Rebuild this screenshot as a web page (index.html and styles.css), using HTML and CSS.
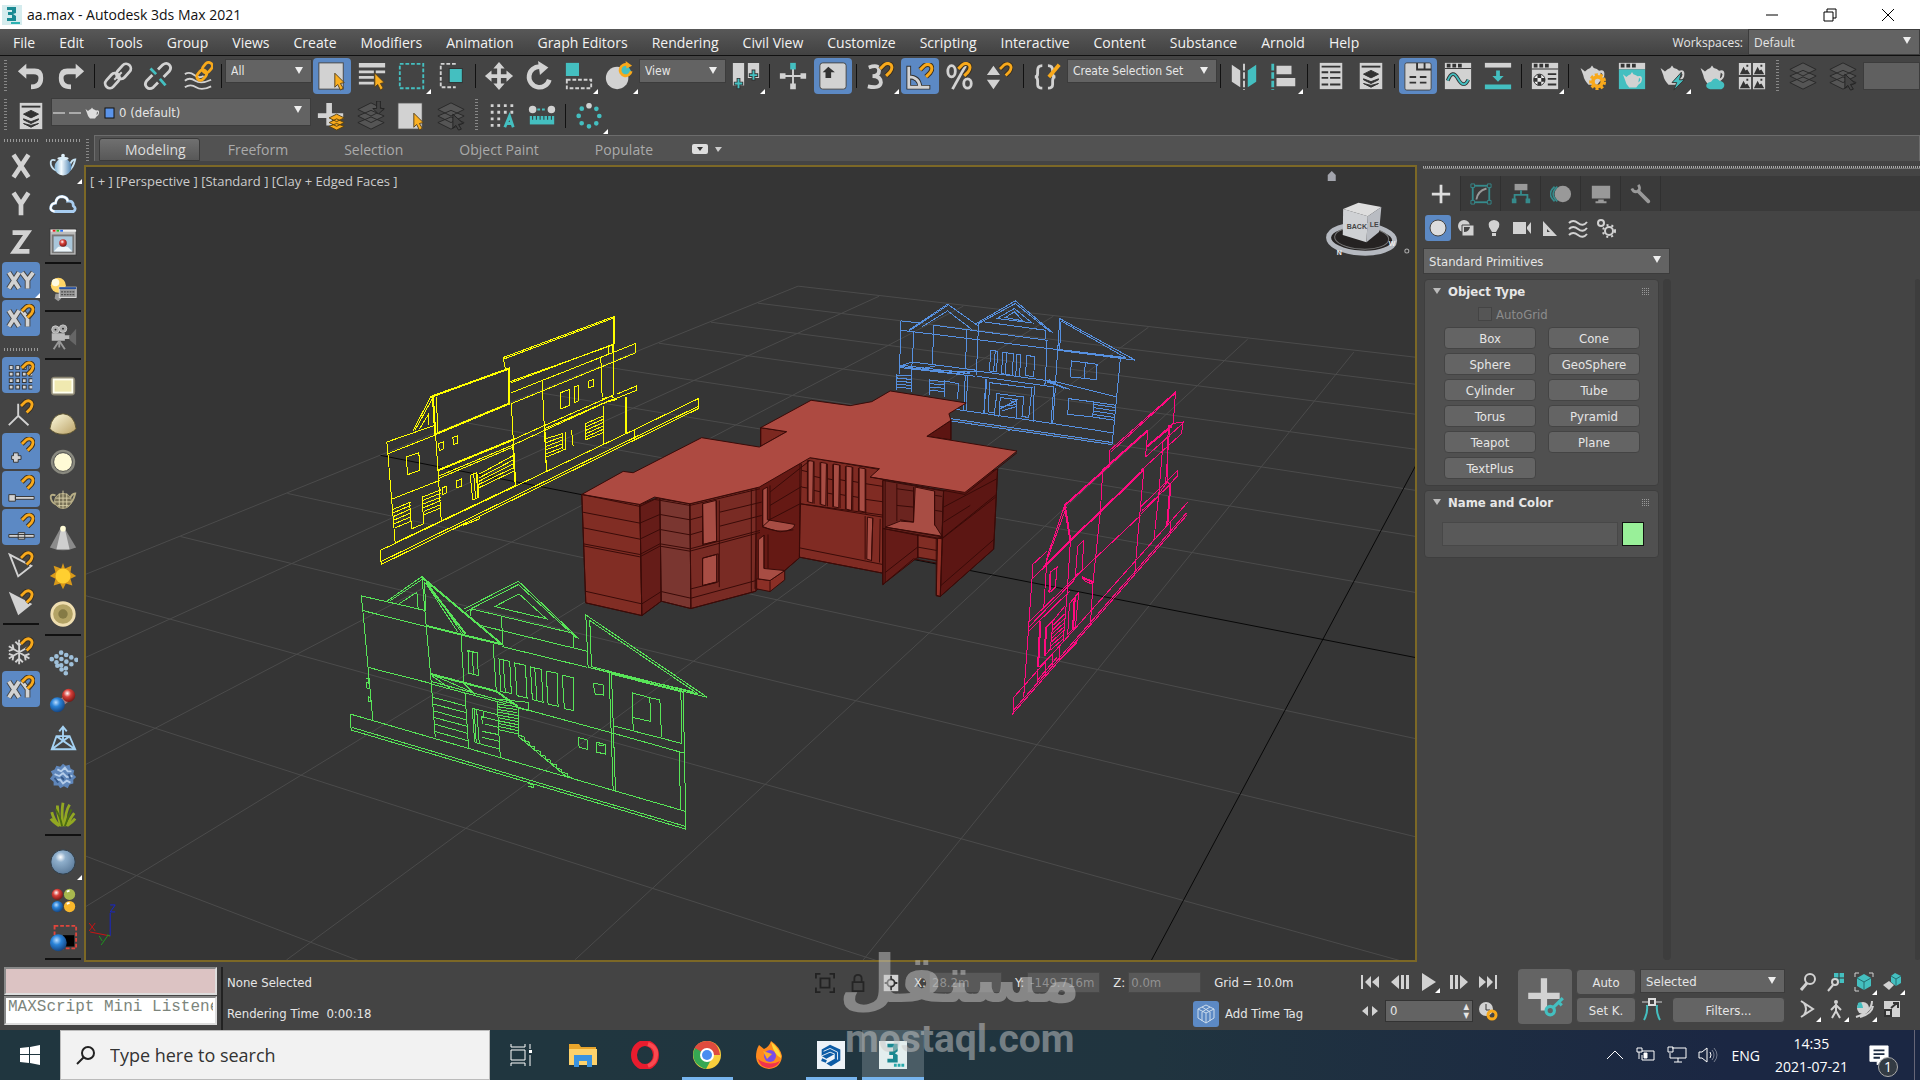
FILE: index.html
```
<!DOCTYPE html>
<html lang="en">
<head>
    <meta charset="UTF-8">
    <meta name="viewport" content="width=device-width, initial-scale=1.0">
    <title>aa.max - Autodesk 3ds Max 2021</title>
    <link rel="stylesheet" href="styles.css">
</head>
<body>
    <!-- Icon sprite -->
    <svg class="sprite" aria-hidden="true">
        <defs>
            <linearGradient id="gold" x1="0" y1="0" x2="1" y2="1"><stop offset="0" stop-color="#fffde0"/><stop offset="1" stop-color="#b9a065"/></linearGradient>
            <radialGradient id="glass" cx=".4" cy=".3" r=".7"><stop offset="0" stop-color="#fff"/><stop offset=".3" stop-color="#8fafcc"/><stop offset="1" stop-color="#5d7c9b"/></radialGradient>
            <radialGradient id="blueBall" cx=".4" cy=".35" r=".7"><stop offset="0" stop-color="#b8dcff"/><stop offset=".4" stop-color="#2a83d8"/><stop offset="1" stop-color="#143f78"/></radialGradient>
            <radialGradient id="redBall" cx=".4" cy=".35" r=".7"><stop offset="0" stop-color="#fff"/><stop offset=".4" stop-color="#d8403a"/><stop offset="1" stop-color="#6d1512"/></radialGradient>
            <linearGradient id="pot" x1="0" y1="0" x2="1" y2="0"><stop offset="0" stop-color="#7fb2d6"/><stop offset=".4" stop-color="#f4fbff"/><stop offset="1" stop-color="#4d83b3"/></linearGradient>
        </defs>
        <symbol id="magnet" viewBox="0 0 16 16"><path d="M2 7 L6 3 Q10 0 13 3 Q15 6 12 10 L8 14" fill="none" stroke="#3a3020" stroke-width="5"/><path d="M2 7 L6 3 Q10 0 13 3 Q15 6 12 10 L8 14" fill="none" stroke="#f8a91b" stroke-width="3"/></symbol>
        <symbol id="cursor" viewBox="0 0 12 20"><path d="M1 1 V16 L4 13 L7 19 L10 17 L7 12 L11 11 Z" fill="#fbb021" stroke="#55401a"/></symbol>
        <symbol id="undo" viewBox="0 0 32 32"><path d="M2 11 L11 3 V8 H20 Q29 8 29 18 Q29 30 16 30 V25 Q24 25 24 18 Q24 14 19 14 H11 V19 Z" fill="#d2d2d2"/></symbol>
        <symbol id="redo" viewBox="0 0 32 32"><path d="M30 11 L21 3 V8 H12 Q3 8 3 18 Q3 30 16 30 V25 Q8 25 8 18 Q8 14 13 14 H21 V19 Z" fill="#d2d2d2"/></symbol>
        <symbol id="link" viewBox="0 0 32 32"><g fill="none" stroke="#d2d2d2" stroke-width="3"><rect x="13" y="6" width="18" height="10" rx="5" transform="rotate(-48 22 11)"/><rect x="1" y="16" width="18" height="10" rx="5" transform="rotate(-48 10 21)"/></g><path d="M12 20 L20 12" stroke="#d2d2d2" stroke-width="2"/></symbol>
        <symbol id="unlink" viewBox="0 0 32 32"><g fill="none" stroke="#d2d2d2" stroke-width="3"><path d="M16 9 L21 4 Q25 1 28 4 Q31 7 28 11 L22 17 M10 15 L4 21 Q1 25 4 28 Q7 31 11 28 L16 23"/></g><path d="M8 8 L14 14 M18 19 L24 26" stroke="#44bfc0" stroke-width="3"/></symbol>
        <symbol id="bind" viewBox="0 0 32 32"><path d="M2 14 Q7 11 12 15 T22 16 M2 21 Q7 17 13 21 T30 20 M2 28 Q8 24 14 28 T30 27" fill="none" stroke="#d2d2d2" stroke-width="2"/><g fill="none" stroke="#f8a91b" stroke-width="3"><rect x="20" y="3" width="12" height="8" rx="4" transform="rotate(-50 26 7)"/><rect x="14" y="11" width="12" height="8" rx="4" transform="rotate(-50 20 15)"/></g></symbol>
        <symbol id="select" viewBox="0 0 32 32"><rect x="2" y="2" width="26" height="28" fill="#d2d2d2" stroke="#444"/><use href="#cursor" x="18" y="12" width="12" height="20"/></symbol>
        <symbol id="byname" viewBox="0 0 32 32"><path d="M2 2 H30 V7 H2 Z M2 10 H18 V13 H2 Z M2 16 H18 V19 H2 Z M2 22 H18 V25 H2 Z M20 10 H30 V13 H20 Z" fill="#d2d2d2"/><use href="#cursor" x="18" y="12" width="12" height="20"/></symbol>
        <symbol id="region" viewBox="0 0 32 32"><rect x="3" y="3" width="25" height="26" fill="none" stroke="#44bfc0" stroke-width="2" stroke-dasharray="4 2"/></symbol>
        <symbol id="crossing" viewBox="0 0 32 32"><path d="M20 3 H4 V28 H20" fill="none" stroke="#d2d2d2" stroke-width="2" stroke-dasharray="4 2"/><rect x="13" y="8" width="14" height="15" fill="#44bfc0" stroke="#303030"/></symbol>
        <symbol id="move" viewBox="0 0 32 32"><path d="M16 1 L22 8 H18 V14 H24 V10 L31 16 L24 22 V18 H18 V24 H22 L16 31 L10 24 H14 V18 H8 V22 L1 16 L8 10 V14 H14 V8 H10 Z" fill="#d2d2d2"/></symbol>
        <symbol id="rotate" viewBox="0 0 32 32"><path d="M17 6 A11 11 0 1 0 27 20" fill="none" stroke="#d2d2d2" stroke-width="5"/><path d="M15 0 L26 7 L17 15 Z" fill="#d2d2d2"/></symbol>
        <symbol id="scale" viewBox="0 0 32 32"><rect x="2" y="2" width="14" height="14" fill="#44bfc0"/><rect x="3" y="20" width="26" height="9" fill="none" stroke="#d2d2d2" stroke-width="2" stroke-dasharray="4 2"/></symbol>
        <symbol id="place" viewBox="0 0 32 32"><ellipse cx="14" cy="18" rx="12" ry="12" fill="#d2d2d2"/><path d="M25 4 A6 6 0 1 0 29 11" fill="#44bfc0" stroke="#f8a91b" stroke-width="3"/><path d="M23 0 L30 5 L24 8 Z" fill="#f8a91b"/></symbol>
        <symbol id="pivot" viewBox="0 0 32 32"><path d="M2 2 H14 V26 H2 Z M18 2 H30 V18 H18 Z" fill="#d2d2d2"/><path d="M8 18 V30 M3 24 H13 M24 9 V21 M19 15 H29" stroke="#333" stroke-width="4"/><path d="M8 19 V29 M4 24 H12 M24 10 V20 M20 15 H28" stroke="#44bfc0" stroke-width="2"/></symbol>
        <symbol id="manipulate" viewBox="0 0 32 32"><path d="M16 6 V27 M5 16 H27" stroke="#d2d2d2" stroke-width="2"/><path d="M2 13 H8 V19 H2 Z M24 13 H30 V19 H24 Z M13 24 H19 V30 H13 Z" fill="#d2d2d2"/><rect x="13" y="2" width="6" height="7" fill="#44bfc0"/></symbol>
        <symbol id="override" viewBox="0 0 32 32"><rect x="2" y="2" width="28" height="28" rx="3" fill="#d2d2d2" stroke="#444"/><path d="M11 6 L18 12 H14 V18 H8 V12 H5 Z" fill="#333"/></symbol>
        <symbol id="snap3" viewBox="0 0 32 32"><path d="M4 7 Q15 3 15 10 Q15 16 8 16 Q17 16 17 23 Q16 30 3 27" fill="none" stroke="#d2d2d2" stroke-width="4"/><use href="#magnet" x="14" y="1" width="17" height="17"/></symbol>
        <symbol id="snapangle" viewBox="0 0 32 32"><path d="M4 5 V28 H27 M4 17 Q15 17 16 28" fill="none" stroke="#303030" stroke-width="5"/><path d="M4 6 V28 H26 M4 17 Q15 17 16 28" fill="none" stroke="#d2d2d2" stroke-width="3"/><use href="#magnet" x="14" y="2" width="17" height="17"/></symbol>
        <symbol id="snappct" viewBox="0 0 32 32"><g fill="none" stroke="#d2d2d2" stroke-width="3"><ellipse cx="7" cy="11" rx="4" ry="6"/><ellipse cx="24" cy="24" rx="4" ry="5"/><path d="M22 5 L8 30"/></g><use href="#magnet" x="12" y="1" width="17" height="17"/></symbol>
        <symbol id="snapspin" viewBox="0 0 32 32"><path d="M2 15 L9 5 L16 15 Z M2 20 H16 L9 30 Z" fill="#d2d2d2"/><use href="#magnet" x="14" y="1" width="16" height="17"/></symbol>
        <symbol id="braces" viewBox="0 0 32 32"><path d="M11 5 Q6 5 6 10 V13 Q6 17 3 17 Q6 17 6 21 V25 Q6 29 11 29 M17 5 Q22 5 22 10 V13 Q22 17 25 17 Q22 17 22 21 V25 Q22 29 17 29" fill="none" stroke="#d2d2d2" stroke-width="3"/><path d="M29 4 L18 17" stroke="#f8a91b" stroke-width="4"/></symbol>
        <symbol id="mirror" viewBox="0 0 32 32"><path d="M3 4 L12 10 V28 L3 22 Z" fill="#d2d2d2"/><path d="M16 3 V31" stroke="#d2d2d2" stroke-width="2" stroke-dasharray="7 2"/><path d="M29 4 L20 10 V28 L29 22 Z" fill="#44bfc0"/></symbol>
        <symbol id="align" viewBox="0 0 32 32"><path d="M4 3 V31" stroke="#44bfc0" stroke-width="3" stroke-dasharray="7 2"/><path d="M8 5 H24 V14 H8 Z M8 18 H28 V27 H8 Z" fill="#d2d2d2"/></symbol>
        <symbol id="list" viewBox="0 0 32 32"><rect x="4" y="2" width="24" height="28" fill="#d2d2d2"/><path d="M6 6 H26 M6 12 H13 M15 12 H26 M6 18 H13 M15 18 H26 M6 25 H13 M15 25 H26" stroke="#333" stroke-width="2"/></symbol>
        <symbol id="layers" viewBox="0 0 32 32"><rect x="4" y="2" width="24" height="28" fill="#d2d2d2"/><path d="M6 6 H26" stroke="#333" stroke-width="2"/><path d="M8 14 L16 10 L24 14 L16 18 Z M8 19 L16 22 L24 19 L24 20 L16 24 L8 20 Z M8 24 L16 28 L24 24 L16 26 Z" fill="#303030" stroke="#303030"/></symbol>
        <symbol id="ribbon" viewBox="0 0 32 32"><rect x="2" y="2" width="28" height="29" rx="2" fill="#d2d2d2" stroke="#444"/><path d="M15 2 V9 H30 M23 2 V9 M7 17 H14 M18 17 H25 M7 23 H14 M18 23 H25" fill="none" stroke="#333" stroke-width="2"/></symbol>
        <symbol id="curve" viewBox="0 0 32 32"><path d="M2 2 H30 V30 H2 Z" fill="#d2d2d2"/><path d="M4 3 H8 V7 H4 Z M10 3 H14 V7 H10 Z M16 3 H20 V7 H16 Z" fill="#333"/><path d="M2 8 H30" stroke="#333"/><path d="M5 21 Q10 8 16 19 T27 20" fill="none" stroke="#333" stroke-width="4"/><path d="M5 21 Q10 8 16 19 T27 20" fill="none" stroke="#44bfc0" stroke-width="2"/></symbol>
        <symbol id="schematic" viewBox="0 0 32 32"><rect x="2" y="2" width="28" height="5" fill="#d2d2d2"/><path d="M14 10 H18 V16 H22 L16 22 L10 16 H14 Z M2 25 H30 V30 H2 Z" fill="#44bfc0"/></symbol>
        <symbol id="material" viewBox="0 0 32 32"><path d="M2 2 H30 V30 H2 Z" fill="#d2d2d2"/><path d="M4 3 H8 V7 H4 Z M10 3 H14 V7 H10 Z M16 3 H20 V7 H16 Z M2 8 H30 V9 H2 Z M19 13 H28 V15 H19 Z M19 18 H28 V20 H19 Z M19 24 H28 V26 H19 Z" fill="#333"/><circle cx="10" cy="20" r="6" fill="#eee" stroke="#333"/><path d="M8 14 H12 V18 H8 Z M4 18 H8 V22 H4 Z M12 18 H16 V22 H12 Z M8 22 H12 V26 H8 Z" fill="#333"/></symbol>
        <symbol id="teapot" viewBox="0 0 32 32"><path d="M3 8 L8 12 Q11 9 14 8 L16 5 L18 8 Q22 9 24 11 Q31 9 30 16 Q30 20 25 23 L22 27 H12 Q7 22 6 16 Z M26 13 L25 20 Q28 18 28 15 Z" fill="currentColor" fill-rule="evenodd"/></symbol>
        <symbol id="rsetup" viewBox="0 0 32 32"><use href="#teapot" width="32" height="30"/><circle cx="22" cy="22" r="7" fill="none" stroke="#f8a91b" stroke-width="4" stroke-dasharray="3 2"/><circle cx="22" cy="22" r="5" fill="none" stroke="#f8a91b" stroke-width="4"/></symbol>
        <symbol id="rframe" viewBox="0 0 32 32"><path d="M2 2 H30 V9 H2 Z" fill="#d2d2d2"/><path d="M4 3 H8 V7 H4 Z M10 3 H14 V7 H10 Z M16 3 H20 V7 H16 Z" fill="#333"/><path d="M2 9 H30 V30 H2 Z" fill="#44bfc0"/><use href="#teapot" x="2" y="8" width="28" height="24"/></symbol>
        <symbol id="rprod" viewBox="0 0 32 32"><use href="#teapot" width="32" height="30"/><path d="M26 12 L16 23 H21 L18 31 L29 20 H24 Z" fill="#44bfc0" stroke="#333"/></symbol>
        <symbol id="rcloud" viewBox="0 0 32 32"><use href="#teapot" width="32" height="30"/><path d="M14 30 Q9 29 10 25 Q12 22 15 22 Q19 16 24 21 Q30 22 29 27 Q28 30 26 30 Z" fill="#44bfc0"/></symbol>
        <symbol id="gallery" viewBox="0 0 32 32"><path d="M2 2 H15 V15 H2 Z M17 2 H30 V15 H17 Z M2 17 H15 V30 H2 Z M17 17 H30 V30 H17 Z" fill="#d2d2d2"/><path d="M3 14 L7 6 L9 10 L11 9 L14 14 Z M18 14 L22 6 L24 10 L26 9 L29 14 Z M3 29 L7 21 L9 25 L11 24 L14 29 Z M18 29 L22 21 L24 25 L26 24 L29 29 Z" fill="#333"/><path d="M10 4 H12 V6 H10 Z M25 4 H27 V6 H25 Z M10 19 H12 V21 H10 Z M25 19 H27 V21 H25 Z" fill="#333"/></symbol>
        <symbol id="stack" viewBox="0 0 32 32"><path d="M2 23 L16 17 L30 23 L16 30 Z M2 16 L16 10 L30 16 L16 23 Z M2 9 L16 2 L30 9 L16 16 Z" fill="#555" stroke="#272727"/></symbol>
        <symbol id="stackcur" viewBox="0 0 32 32"><use href="#stack"/><path d="M18 14 V29 L21 26 L24 31 L27 30 L24 25 L29 24 Z" fill="#444" stroke="#222"/></symbol>
        <symbol id="stackin" viewBox="0 0 32 32"><use href="#stack"/><path d="M22 0 H26 V8 H30 L24 14 L18 8 H22 Z" fill="#444" stroke="#222"/></symbol>
        <symbol id="newlayer" viewBox="0 0 32 32"><path d="M11 2 H17 V13 H29 V18 H17 V26 H11 V18 H2 V13 H11 Z" fill="#d2d2d2"/><path d="M14 18 L22 14 L30 18 L22 22 Z M14 23 L22 19 L30 23 L22 27 Z M14 27 L22 24 L30 27 L22 31 Z" fill="#f8a91b" stroke="#5a4210"/></symbol>
        <symbol id="arraya" viewBox="0 0 32 32"><path d="M4 5 H29 M4 12 H29 M4 19 H17 M4 26 H17" stroke="#d2d2d2" stroke-width="3" stroke-dasharray="3 4"/><path d="M19 28 L24 16 L28 28 M20 24 H27" fill="none" stroke="#44bfc0" stroke-width="3"/></symbol>
        <symbol id="measure" viewBox="0 0 32 32"><circle cx="6" cy="9" r="4" fill="#d2d2d2"/><circle cx="26" cy="9" r="4" fill="#d2d2d2"/><path d="M11 9 H21" stroke="#44bfc0" stroke-width="2" stroke-dasharray="3 2"/><path d="M3 16 H29 V25 H3 Z" fill="#44bfc0"/><path d="M6 16 V20 M10 16 V20 M14 16 V20 M18 16 V20 M22 16 V20 M26 16 V20" stroke="#303030"/></symbol>
        <symbol id="ring" viewBox="0 0 32 32"><circle cx="16" cy="16" r="11" fill="none" stroke="#44bfc0" stroke-width="5" stroke-linecap="round" stroke-dasharray="0 8.6"/><circle cx="16" cy="5" r="3" fill="#d2d2d2"/></symbol>
        <!-- Axis and snap column -->
        <symbol id="ax-x" viewBox="0 0 32 32"><path d="M8 4 L24 28 M24 4 L8 28" stroke="#d2d2d2" stroke-width="5"/></symbol>
        <symbol id="ax-y" viewBox="0 0 32 32"><path d="M8 4 L16 16 L24 4 M16 15 V28" fill="none" stroke="#d2d2d2" stroke-width="5"/></symbol>
        <symbol id="ax-z" viewBox="0 0 32 32"><path d="M7 6 H23 L9 26 H25" fill="none" stroke="#d2d2d2" stroke-width="5"/></symbol>
        <symbol id="ax-xy" viewBox="0 0 32 32"><g fill="none" stroke="#454545" stroke-width="6"><path d="M3 8 L14 25 M14 8 L3 25 M17 8 L23 16 L29 8 M23 15 V25"/></g><g fill="none" stroke="#d2d2d2" stroke-width="4"><path d="M3 8 L14 25 M14 8 L3 25 M17 8 L23 16 L29 8 M23 15 V25"/></g></symbol>
        <symbol id="ax-xym" viewBox="0 0 32 32"><use href="#ax-xy"/><use href="#magnet" x="15" y="1" width="16" height="17"/></symbol>
        <symbol id="s-grid" viewBox="0 0 32 32"><path d="M3 8 H28 M3 15 H28 M3 22 H28 M3 29 H28" stroke="#333" stroke-width="5" stroke-dasharray="5 2"/><path d="M4 8 H28 M4 15 H28 M4 22 H28 M4 29 H28" stroke="#d2d2d2" stroke-width="3" stroke-dasharray="3 4"/><use href="#magnet" x="15" y="1" width="16" height="17"/></symbol>
        <symbol id="s-axis" viewBox="0 0 32 32"><path d="M13 6 V19 L3 29 M13 19 L24 29" fill="none" stroke="#d2d2d2" stroke-width="2"/><use href="#magnet" x="14" y="1" width="16" height="17"/></symbol>
        <symbol id="s-vert" viewBox="0 0 32 32"><path d="M8 18 H13 V21 H16 V25 H13 V28 H8 V25 H6 V21 H8 Z" fill="#d2d2d2" stroke="#333"/><use href="#magnet" x="15" y="1" width="16" height="17"/></symbol>
        <symbol id="s-end" viewBox="0 0 32 32"><path d="M10 24 H30 V27 H10 Z M3 22 H10 V29 H3 Z" fill="#d2d2d2" stroke="#333"/><use href="#magnet" x="15" y="1" width="16" height="17"/></symbol>
        <symbol id="s-mid" viewBox="0 0 32 32"><path d="M3 24 H30 V27 H3 Z M13 22 H20 V29 H13 Z" fill="#d2d2d2" stroke="#333"/><use href="#magnet" x="15" y="1" width="16" height="17"/></symbol>
        <symbol id="s-edge" viewBox="0 0 32 32"><path d="M4 5 L27 17 L13 28 Z" fill="none" stroke="#d2d2d2" stroke-width="2"/><use href="#magnet" x="14" y="1" width="16" height="17"/></symbol>
        <symbol id="s-face" viewBox="0 0 32 32"><path d="M3 4 L28 17 L13 29 Z" fill="#d2d2d2"/><use href="#magnet" x="14" y="1" width="16" height="17"/></symbol>
        <symbol id="s-frost" viewBox="0 0 32 32"><path d="M14 4 V30 M3 11 L25 24 M25 11 L3 24 M10 6 L14 10 L18 6 M10 28 L14 24 L18 28 M3 16 L8 14 L7 9 M25 19 L20 21 L21 26 M3 19 L8 21 L7 26" fill="none" stroke="#d2d2d2" stroke-width="2"/><use href="#magnet" x="14" y="1" width="16" height="17"/></symbol>
        <!-- Objects column -->
        <symbol id="o-pot" viewBox="0 0 32 32"><path d="M8 10 Q2 8 3 14 Q4 19 9 21 M23 16 Q25 9 29 9 Q27 18 22 21" fill="none" stroke="#c7e2f2" stroke-width="2"/><ellipse cx="16" cy="17" rx="9" ry="9" fill="url(#pot)"/><ellipse cx="16" cy="8" rx="6" ry="2" fill="#d9ecf8"/><circle cx="16" cy="5" r="2" fill="#dff0fa"/></symbol>
        <symbol id="o-cloud" viewBox="0 0 32 32"><path d="M7 24 Q2 23 3 19 Q4 15 8 15 Q9 8 15 8 Q21 9 21 13 Q27 12 27 18 Q31 21 27 24 Z" fill="none" stroke="#a8cdf0" stroke-width="3"/><path d="M7 24 Q2 23 3 19 Q4 15 8 15 Q9 8 15 8 Q21 9 21 13" fill="none" stroke="#fff" stroke-width="2"/></symbol>
        <symbol id="o-frame" viewBox="0 0 32 32"><rect x="2" y="2" width="28" height="28" fill="#bbb" stroke="#333"/><path d="M3 4 H30" stroke="#eee" stroke-width="2"/><path d="M13 4 H16" stroke="#2b6df0" stroke-width="2"/><path d="M5 4 H8" stroke="#e02020" stroke-width="2"/><path d="M9 4 H12" stroke="#28b828" stroke-width="2"/><rect x="5" y="9" width="22" height="18" fill="#a9c6da" stroke="#777" stroke-width="2"/><path d="M6 26 L11 21 H21 L26 26 Z" fill="#eef6fa"/><circle cx="16" cy="17" r="4" fill="url(#redBall)"/></symbol>
        <symbol id="o-bulb" viewBox="0 0 32 32"><circle cx="11" cy="11" r="8" fill="#ffd566"/><circle cx="8" cy="8" r="4" fill="#fffbe0"/><path d="M8 20 H14 V25 L11 28 L7 25 Z" fill="#999"/><rect x="12" y="13" width="18" height="11" fill="#999" stroke="#ddd"/><path d="M12 14 H30" stroke="#2650a0" stroke-width="2"/><path d="M14 18 H28 M14 21 H28" stroke="#333" stroke-dasharray="2 1"/></symbol>
        <symbol id="o-cam" viewBox="0 0 32 32"><circle cx="8" cy="7" r="4" fill="#aaa" stroke="#ccc"/><circle cx="16" cy="6" r="4" fill="#aaa" stroke="#ccc"/><circle cx="8" cy="7" r="1" fill="#222"/><circle cx="16" cy="6" r="1" fill="#222"/><path d="M4 11 H18 V19 H4 Z M18 13 H23 V17 H18 Z" fill="#bbb"/><path d="M23 14 L30 6 V24 L23 18 Z" fill="#666"/><path d="M12 19 L6 28 M12 19 L18 28 M12 19 V26" stroke="#999" stroke-width="2"/></symbol>
        <symbol id="o-plane" viewBox="0 0 32 32"><rect x="3" y="6" width="26" height="20" rx="4" fill="#8c8672"/><rect x="6" y="9" width="20" height="14" fill="#f0e9b0" stroke="#fffff0" stroke-width="2"/></symbol>
        <symbol id="o-dome" viewBox="0 0 32 32"><path d="M2 21 Q4 6 16 5 Q28 6 30 21 Q25 27 16 27 Q7 27 2 21 Z" fill="url(#gold)" stroke="#5c522f"/></symbol>
        <symbol id="o-disc" viewBox="0 0 32 32"><circle cx="16" cy="16" r="13" fill="#8a8a80"/><circle cx="16" cy="16" r="10" fill="#fffbd6" stroke="#444"/></symbol>
        <symbol id="o-mesh" viewBox="0 0 32 32"><path d="M8 11 Q2 9 3 14 Q4 19 9 21 M23 16 Q25 9 29 9 Q27 18 22 21" fill="none" stroke="#b6ad85" stroke-width="2"/><ellipse cx="16" cy="17" rx="9" ry="8" fill="#777056" stroke="#b6ad85"/><path d="M8 14 H24 M7 18 H25 M10 22 H22 M12 9 V24 M16 6 V25 M20 9 V24" stroke="#d6cda5"/></symbol>
        <symbol id="o-spot" viewBox="0 0 32 32"><path d="M13 6 Q16 3 18 6 L30 26 Q16 32 2 26 Z" fill="#8b8b8b"/><path d="M14 6 H18 L23 28 H9 Z" fill="#cfcfcf"/><circle cx="16" cy="6" r="3" fill="#fffbd6"/></symbol>
        <symbol id="o-sun" viewBox="0 0 32 32"><path d="M16 2 L18 8 L25 5 L24 12 L30 16 L24 19 L26 26 L19 24 L16 30 L13 24 L6 26 L8 19 L2 16 L8 12 L6 5 L14 8 Z" fill="#d99a1a"/><circle cx="16" cy="16" r="8" fill="#ffcf30"/></symbol>
        <symbol id="o-ring" viewBox="0 0 32 32"><circle cx="16" cy="16" r="12" fill="#b3a365" stroke="#efdeb0" stroke-width="3"/><circle cx="16" cy="16" r="5" fill="#857a45"/></symbol>
        <symbol id="o-dots" viewBox="0 0 32 32"><g stroke="#9fc0da" stroke-width="5" stroke-linecap="round" stroke-dasharray="0 6"><path d="M14 6 L31 14"/><path d="M9 10 L26 19"/><path d="M4 13 L21 24"/><path d="M10 20 L19 28"/></g></symbol>
        <symbol id="o-balls" viewBox="0 0 32 32"><path d="M12 16 L20 9 L24 16 L16 22 Z" fill="#a98080"/><circle cx="10" cy="21" r="8" fill="url(#blueBall)"/><circle cx="22" cy="11" r="7" fill="url(#redBall)"/></symbol>
        <symbol id="o-pyr" viewBox="0 0 32 32"><path d="M4 28 L9 14 H23 L29 28 Z M9 14 L29 28 M23 14 L4 28 M16 20 V4 M12 9 L16 4 L20 9" fill="none" stroke="#a5d2f3" stroke-width="2"/></symbol>
        <symbol id="o-fur" viewBox="0 0 32 32"><path d="M16 3 L19 5 L23 4 L24 8 L28 10 L27 14 L30 17 L27 20 L27 24 L23 25 L21 29 L17 27 L13 29 L11 26 L6 26 L6 22 L2 19 L5 15 L3 11 L7 9 L9 5 L13 6 Z" fill="#5f86ba"/><path d="M10 9 L14 11 L18 7 L21 11 L25 11 M7 14 L12 16 L16 13 L20 17 L26 16 M8 20 L13 20 L16 24 L20 21 L24 23" fill="none" stroke="#b4cdea" stroke-width="2"/><path d="M7 18 L11 23 M14 17 L17 20 M22 14 L24 19" stroke="#355888" stroke-width="2"/></symbol>
        <symbol id="o-grass" viewBox="0 0 32 32"><path d="M12 29 Q6 22 4 14 M14 29 Q10 18 10 7 M16 29 Q14 15 16 4 M18 29 Q18 14 23 6 M20 29 Q24 20 28 15 M11 28 Q5 24 3 21 M21 28 Q26 25 29 21" fill="none" stroke="#92a822" stroke-width="3"/><path d="M15 29 Q13 18 8 11 M18 29 Q21 20 25 11" stroke="#4b6d12" stroke-width="2" fill="none"/></symbol>
        <symbol id="o-ball" viewBox="0 0 32 32"><circle cx="16" cy="16" r="13" fill="url(#glass)" stroke="#2e3c48"/></symbol>
        <symbol id="o-four" viewBox="0 0 32 32"><circle cx="10" cy="10" r="6" fill="url(#redBall)"/><circle cx="23" cy="10" r="6" fill="#a8b84e"/><circle cx="10" cy="23" r="6" fill="url(#blueBall)"/><circle cx="23" cy="23" r="6" fill="#f8b72c"/><path d="M20 7 L23 6 M20 20 L23 19" stroke="#fff" stroke-width="2"/></symbol>
        <symbol id="o-render" viewBox="0 0 32 32"><rect x="7" y="3" width="23" height="24" fill="none" stroke="#e0453c" stroke-width="2" stroke-dasharray="4 2"/><rect x="16" y="13" width="12" height="12"/><circle cx="11" cy="21" r="9" fill="url(#blueBall)"/></symbol>
    </svg>

    <header class="titlebar">
        <svg class="app-icon" viewBox="0 0 20 20"><rect width="20" height="20" fill="#d5ecee"/><path d="M5 2 H14 V8 L11 9 L14 11 V16 H5 V13 H10 V10 H6 V7 H10 V5 H5 Z" fill="#1a8a93"/><path d="M9 18 H18" stroke="#2db2b2" stroke-width="2"/></svg>
        <h1>aa.max - Autodesk 3ds Max 2021</h1>
        <div class="window-buttons">
            <button aria-label="Minimize"><svg viewBox="0 0 14 14"><path d="M1 7 H13"/></svg></button>
            <button aria-label="Restore"><svg viewBox="0 0 14 14"><path d="M1 4 H10 V13 H1 Z M4 4 V1 H13 V10 H10"/></svg></button>
            <button aria-label="Close"><svg viewBox="0 0 14 14"><path d="M1 1 L13 13 M13 1 L1 13"/></svg></button>
        </div>
    </header>

    <nav class="menubar">
        <a href="#">File</a><a href="#">Edit</a><a href="#">Tools</a><a href="#">Group</a><a href="#">Views</a><a href="#">Create</a><a href="#">Modifiers</a><a href="#">Animation</a><a href="#">Graph Editors</a><a href="#">Rendering</a><a href="#">Civil View</a><a href="#">Customize</a><a href="#">Scripting</a><a href="#">Interactive</a><a href="#">Content</a><a href="#">Substance</a><a href="#">Arnold</a><a href="#">Help</a>
        <label class="push" for="workspaces">Workspaces:</label>
        <span class="combo workspace"><select id="workspaces"><option>Default</option></select></span>
    </nav>

    <div class="toolbar main-toolbar">
        <i class="grip"></i>
        <button class="tool" aria-label="Undo"><svg><use href="#undo"/></svg></button>
        <button class="tool" aria-label="Redo"><svg><use href="#redo"/></svg></button>
        <i class="sep"></i>
        <button class="tool" aria-label="Link"><svg><use href="#link"/></svg></button>
        <button class="tool" aria-label="Unlink"><svg><use href="#unlink"/></svg></button>
        <button class="tool" aria-label="Bind to space warp"><svg><use href="#bind"/></svg></button>
        <i class="sep"></i>
        <span class="combo small"><select aria-label="Selection filter"><option>All</option></select></span>
        <button class="tool on" aria-label="Select object"><svg><use href="#select"/></svg></button>
        <button class="tool" aria-label="Select by name"><svg><use href="#byname"/></svg></button>
        <button class="tool more" aria-label="Selection region"><svg><use href="#region"/></svg></button>
        <button class="tool" aria-label="Window/crossing"><svg><use href="#crossing"/></svg></button>
        <i class="sep"></i>
        <button class="tool" aria-label="Move"><svg><use href="#move"/></svg></button>
        <button class="tool" aria-label="Rotate"><svg><use href="#rotate"/></svg></button>
        <button class="tool more" aria-label="Scale"><svg><use href="#scale"/></svg></button>
        <button class="tool more" aria-label="Place"><svg><use href="#place"/></svg></button>
        <span class="combo small"><select aria-label="Coordinate system"><option>View</option></select></span>
        <button class="tool more" aria-label="Pivot center"><svg><use href="#pivot"/></svg></button>
        <i class="sep"></i>
        <button class="tool" aria-label="Manipulate"><svg><use href="#manipulate"/></svg></button>
        <button class="tool on" aria-label="Keyboard override"><svg><use href="#override"/></svg></button>
        <i class="sep"></i>
        <button class="tool more" aria-label="Snaps"><svg><use href="#snap3"/></svg></button>
        <button class="tool on" aria-label="Angle snap"><svg><use href="#snapangle"/></svg></button>
        <button class="tool" aria-label="Percent snap"><svg><use href="#snappct"/></svg></button>
        <button class="tool" aria-label="Spinner snap"><svg><use href="#snapspin"/></svg></button>
        <i class="sep"></i>
        <button class="tool" aria-label="Edit selection sets"><svg><use href="#braces"/></svg></button>
        <span class="combo set"><select aria-label="Selection sets"><option>Create Selection Set</option></select></span>
        <i class="sep"></i>
        <button class="tool" aria-label="Mirror"><svg><use href="#mirror"/></svg></button>
        <button class="tool more" aria-label="Align"><svg><use href="#align"/></svg></button>
        <i class="sep"></i>
        <button class="tool" aria-label="Scene explorer"><svg><use href="#list"/></svg></button>
        <button class="tool" aria-label="Layer explorer"><svg><use href="#layers"/></svg></button>
        <i class="sep"></i>
        <button class="tool on" aria-label="Toggle ribbon"><svg><use href="#ribbon"/></svg></button>
        <button class="tool" aria-label="Curve editor"><svg><use href="#curve"/></svg></button>
        <button class="tool" aria-label="Schematic view"><svg><use href="#schematic"/></svg></button>
        <i class="sep"></i>
        <button class="tool more" aria-label="Material editor"><svg><use href="#material"/></svg></button>
        <i class="sep"></i>
        <button class="tool" aria-label="Render setup"><svg><use href="#rsetup"/></svg></button>
        <button class="tool" aria-label="Rendered frame"><svg><use href="#rframe"/></svg></button>
        <button class="tool more" aria-label="Render production"><svg><use href="#rprod"/></svg></button>
        <button class="tool" aria-label="Render in cloud"><svg><use href="#rcloud"/></svg></button>
        <button class="tool" aria-label="Gallery"><svg><use href="#gallery"/></svg></button>
        <i class="grip"></i>
        <button class="tool" aria-label="Layers"><svg><use href="#stack"/></svg></button>
        <button class="tool" aria-label="Select layer objects"><svg><use href="#stackcur"/></svg></button>
        <input class="layer-field" aria-label="Layer" disabled>
    </div>

    <div class="toolbar layer-toolbar">
        <i class="grip"></i>
        <button class="tool" aria-label="Layer manager"><svg><use href="#layers"/></svg></button>
        <span class="combo layer">
            <svg class="layer-marks" viewBox="0 0 64 24"><path d="M1 14 H13 M17 14 H29" stroke="#aaa" stroke-width="2"/><g color="#ddd"><use href="#teapot" x="32" y="6" width="16" height="16"/></g><rect x="53" y="9" width="9" height="10" fill="#5b94ea" stroke="#111"/></svg>
            <select aria-label="Active layer"><option>0 (default)</option></select>
        </span>
        <button class="tool" aria-label="New layer"><svg><use href="#newlayer"/></svg></button>
        <button class="tool" aria-label="Add to layer"><svg><use href="#stackin"/></svg></button>
        <button class="tool" aria-label="Select in layer"><svg><use href="#select"/></svg></button>
        <button class="tool" aria-label="Set current layer"><svg><use href="#stackcur"/></svg></button>
        <i class="grip"></i>
        <button class="tool" aria-label="Auto grid array"><svg><use href="#arraya"/></svg></button>
        <button class="tool" aria-label="Measure"><svg><use href="#measure"/></svg></button>
        <i class="sep"></i>
        <button class="tool more" aria-label="Array"><svg><use href="#ring"/></svg></button>
    </div>

    <main>
        <aside class="side">
            <div class="side-col">
                <i class="hgrip"></i>
                <button class="tool" aria-label="X"><svg><use href="#ax-x"/></svg></button>
                <button class="tool" aria-label="Y"><svg><use href="#ax-y"/></svg></button>
                <button class="tool" aria-label="Z"><svg><use href="#ax-z"/></svg></button>
                <button class="tool on more" aria-label="XY"><svg><use href="#ax-xy"/></svg></button>
                <button class="tool on" aria-label="Snap XY"><svg><use href="#ax-xym"/></svg></button>
                <i class="hgrip tall"></i>
                <button class="tool on" aria-label="Snap grid"><svg><use href="#s-grid"/></svg></button>
                <button class="tool" aria-label="Snap pivot"><svg><use href="#s-axis"/></svg></button>
                <button class="tool on" aria-label="Snap vertex"><svg><use href="#s-vert"/></svg></button>
                <button class="tool on" aria-label="Snap endpoint"><svg><use href="#s-end"/></svg></button>
                <button class="tool on" aria-label="Snap midpoint"><svg><use href="#s-mid"/></svg></button>
                <button class="tool" aria-label="Snap edge"><svg><use href="#s-edge"/></svg></button>
                <button class="tool" aria-label="Snap face"><svg><use href="#s-face"/></svg></button>
                <i class="hsep"></i>
                <button class="tool" aria-label="Snap frozen"><svg><use href="#s-frost"/></svg></button>
                <button class="tool on" aria-label="Snap constraints"><svg><use href="#ax-xym"/></svg></button>
            </div>
            <div class="side-col">
                <i class="hgrip"></i>
                <button class="tool more" aria-label="Render"><svg><use href="#o-pot"/></svg></button>
                <button class="tool" aria-label="Cloud render"><svg><use href="#o-cloud"/></svg></button>
                <button class="tool" aria-label="Frame buffer"><svg><use href="#o-frame"/></svg></button>
                <i class="hsep"></i>
                <button class="tool" aria-label="Light lister"><svg><use href="#o-bulb"/></svg></button>
                <i class="hsep"></i>
                <button class="tool" aria-label="Camera"><svg><use href="#o-cam"/></svg></button>
                <i class="hsep"></i>
                <button class="tool" aria-label="Plane light"><svg><use href="#o-plane"/></svg></button>
                <button class="tool" aria-label="Dome light"><svg><use href="#o-dome"/></svg></button>
                <button class="tool" aria-label="Sphere light"><svg><use href="#o-disc"/></svg></button>
                <button class="tool" aria-label="Mesh light"><svg><use href="#o-mesh"/></svg></button>
                <button class="tool" aria-label="Spot light"><svg><use href="#o-spot"/></svg></button>
                <button class="tool" aria-label="Sun"><svg><use href="#o-sun"/></svg></button>
                <button class="tool" aria-label="Disc light"><svg><use href="#o-ring"/></svg></button>
                <i class="hsep"></i>
                <button class="tool" aria-label="Cluster"><svg><use href="#o-dots"/></svg></button>
                <button class="tool" aria-label="Metaballs"><svg><use href="#o-balls"/></svg></button>
                <button class="tool" aria-label="Infinite plane"><svg><use href="#o-pyr"/></svg></button>
                <button class="tool" aria-label="Fur"><svg><use href="#o-fur"/></svg></button>
                <button class="tool" aria-label="Grass"><svg><use href="#o-grass"/></svg></button>
                <i class="hsep"></i>
                <button class="tool more" aria-label="Material"><svg><use href="#o-ball"/></svg></button>
                <button class="tool" aria-label="Material library"><svg><use href="#o-four"/></svg></button>
                <button class="tool" aria-label="Region render"><svg><use href="#o-render"/></svg></button>
                <i class="hsep"></i>
            </div>
        </aside>

        <div class="work">
            <div class="ribbon">
                <i class="grip"></i>
                <div class="tabs">
                    <button class="active">Modeling</button><button>Freeform</button><button>Selection</button><button>Object Paint</button><button>Populate</button>
                    <svg class="ribbon-toggle" viewBox="0 0 32 12"><rect x="1" y="1" width="16" height="10" rx="2" fill="#ddd"/><path d="M6 4 H12 L9 8 Z" fill="#333"/><path d="M24 4 H31 L27 9 Z" fill="#ccc"/></svg>
                </div>
            </div>

            <div class="stage">
                <section class="viewport">
                    <div class="vp-label">[ + ] [Perspective ] [Standard ] [Clay + Edged Faces ]</div>
                    <svg class="scene" viewBox="86 167 1329 792" preserveAspectRatio="xMidYMid slice">
                        <!-- Ground grid -->
                        <g class="grid">
                            <path d="M798 286 L1415 357 M758 303 L1415 384 M711 322 L1415 414 M659 343 L1415 449 M601 366 L1415 490 M537 392 L1415 536 M464 422 L1415 592 M288 493 L1415 738 M181 536 L1415 836 M86 595 L1415 964 M86 705 L1415 1133 M86 855 L1415 1364"/>
                            <path d="M798 286 L86 574 M879 296 L86 657 M963 306 L86 764 M1053 316 L86 906 M1148 327 L287 959 M1247 339 L575 959 M1353 352 L863 959"/>
                        </g>
                        <path class="axis" d="M381 455 L1415 657 M1415 465 L1151 959"/>

                        <!-- Blue rear elevation -->
                        <svg class="wire blue" x="870" y="280" width="340" height="440" viewBox="0 0 1020 1320">
                            <path d="M92 122 L88 282 M92 122 L145 128 M92 150 L560 208 L750 232 L725 492 M115 150 L232 72 L325 138 M112 155 L232 76 M155 140 L232 92 L305 148 M130 155 L127 250 M190 135 L187 255 M190 135 L530 180 M290 150 L285 265 M325 125 L318 285 M318 130 L435 62 L548 158 M325 130 L435 70 L540 155 M380 115 L432 85 L485 128 Z M405 112 L432 95 L458 122 Z M340 125 L525 150 V175"/>
                            <path d="M568 115 L562 210 L795 240 Z M572 122 L568 208 L765 232 Z M530 180 L525 310 M562 210 L555 310"/>
                            <path d="M80 282 V330 M125 250 V335 M80 285 H125 M80 293 L125 298 M80 302 L125 307 M80 311 L125 316 M80 320 L125 325 M88 258 L125 245 L320 270 L275 282 Z M90 262 L315 288 M95 255 L300 280 M155 265 L205 255 M130 268 L320 275 M178 295 V345 M222 300 V350 M178 300 L222 304 M178 310 L222 314 M178 320 L222 324 M178 330 L222 334 M222 302 L265 310 L262 355"/>
                            <path d="M318 272 L560 305 L740 350 M320 288 L550 320 M362 210 L357 272 L378 275 L383 213 Z M375 212 L370 272 M398 217 L393 280 L425 285 L430 220 Z M410 218 L404 282 M440 222 L436 288 L447 290 L452 222 Z M470 225 L465 285 L490 290 L493 230 Z M603 242 L600 290 L677 298 L680 252 Z M645 246 L641 294"/>
                            <path d="M285 285 L280 390 M292 285 L288 392 M350 295 L340 400 M345 295 L343 402 M357 307 L355 395 L372 398 L380 340 L460 350 L455 408 L475 412 L485 323 Z M390 350 L386 410 M390 352 L440 358 L438 415 M390 385 L440 360 M390 380 L440 372 M395 392 L440 378 M420 360 L440 375 M492 318 L488 425 M550 320 L542 430 M555 322 L547 432 M525 300 L600 328 M530 305 L590 325 M525 300 L523 318 M535 298 L580 325"/>
                            <path d="M595 355 L592 402 L667 410 L670 365 Z M595 355 L738 375 M670 372 L736 382 M669 382 L736 392 M668 392 L735 402 M667 402 L734 412 M667 410 L733 420 M242 385 L550 430 L730 458 M242 415 L728 487 M242 422 L726 493 M405 445 L418 452"/>
                        </svg>

                        <!-- Yellow side elevation -->
                        <svg class="wire yellow" x="330" y="300" width="420" height="280" viewBox="0 0 1260 840">
                            <path d="M520 172 L855 48 V130 L543 248 M523 176 L853 53 M520 172 L527 205 M538 245 L850 134 M543 278 L917 130 V158 L545 310 M850 50 L852 285 M836 138 V160 M848 135 V155 M813 170 L817 290 M637 240 L650 512"/>
                            <path class="thick" d="M303 290 L538 205 V310 L317 402 L310 290"/>
                            <path d="M320 290 L325 395 M303 290 L250 392 M310 292 L256 390 M298 340 L270 385 M298 340 V375 M172 425 L315 375 M172 425 L175 460 L315 405 M175 460 L197 728 M318 402 L335 662 M187 596 L330 540 M545 310 L558 555 M549 430 L555 545"/>
                            <path d="M230 470 L268 457 L270 510 L234 523 Z M327 430 L343 424 V445 L329 451 Z M370 411 L385 406 V428 L371 433 Z M691 278 L720 267 V315 L692 326 Z M733 260 L746 256 V302 L734 307 Z M775 243 L790 238 V258 L776 263 Z M339 562 L352 557 V576 L340 582 Z M380 542 L395 536 V557 L382 562 Z"/>
                            <path class="thick" d="M325 510 L550 418 M888 290 L890 400"/>
                            <path d="M325 528 L550 434 L645 390 L820 310 L920 270 V257 L860 282 M325 535 L550 440 M550 418 L645 375 L850 285 M647 384 L850 296 M817 295 L845 288 L860 298 L830 305 M820 318 L822 430 M645 370 L650 512"/>
                            <path d="M190 627 L245 604 M192 637 L245 614 M192 648 L245 625 M193 659 L245 637 M194 670 L245 649 M195 683 L245 662 M278 590 L335 568 M279 600 L335 578 M280 611 L335 590 M281 622 L335 600 M282 633 L335 612 M283 643 L335 622 M240 605 L246 685 L282 670 L278 590"/>
                            <path d="M422 525 L440 517 L445 592 L429 598 Z M432 520 L438 596 M443 520 L448 592 M447 522 L550 466 M447 533 L552 478 M447 543 L552 490 M447 552 L552 502 M448 562 L553 512"/>
                            <path d="M648 415 L698 400 M648 427 L697 410 M649 438 L697 420 M650 448 L697 431 M650 460 L697 442 M650 470 L710 445 M698 398 V445 M706 395 L708 445 M725 388 L730 437 M767 370 V418 M767 370 L822 346 M767 380 L822 356 M768 390 L822 366 M768 400 L822 376 M768 410 L822 386 M768 418 L822 396"/>
                            <path d="M152 750 L914 388 L1105 295 V325 L155 792 Z M155 783 L1105 318 M195 728 L558 555 M914 388 V416 M400 675 L450 655 V648"/>
                        </svg>

                        <!-- Clay model -->
                        <svg class="clay" x="560" y="370" width="480" height="260" viewBox="0 0 1440 780">
                            <path fill="#7c2820" d="M602 172 L680 184 L602 228 Z"/>
                            <path fill="#5c1512" d="M1172 150 L1100 198 L1172 208 Z"/>
                            <path fill="#812d24" d="M66 372 L240 402 L246 735 L78 697 Z"/>
                            <path fill="#651c18" d="M240 402 L300 380 L304 692 L246 735 Z"/>
                            <path fill="#7a3630" d="M300 385 L390 400 L393 714 L304 692 Z"/>
                            <path fill="#792b24" d="M390 400 L600 350 L588 662 L393 714 Z"/>
                            <path fill="#651914" d="M588 352 L750 262 L718 562 L674 600 L588 660 Z"/>
                            <path fill="#802b23" d="M720 270 L750 262 L975 300 L968 608 L718 560 Z"/>
                            <path fill="#6b241f" d="M968 330 L1150 362 L1145 500 L1130 505 V570 L1073 560 L1060 565 L968 642 Z"/>
                            <path fill="#651b17" d="M968 474 L1073 495 V560 L968 642 Z"/>
                            <path fill="#812d24" d="M1073 495 L1132 505 V570 L1073 560 Z"/>
                            <path fill="#5c1613" d="M1150 362 L1312 295 L1300 536 L1140 678 Z"/>
                            <path fill="#923127" d="M1132 503 H1147 L1140 678 L1128 674 Z"/>
                            <path fill="#8b2f26" d="M590 625 L630 630 L674 600 V628 L630 663 L590 655 Z"/>
                            <path fill="#ad4a41" d="M66 372 L190 303 L220 307 L425 202 L598 230 L680 184 L602 172 L753 90 L870 106 L935 94 L990 62 L1218 98 L1166 130 L1172 150 L1100 198 L1370 242 L1214 366 L930 320 L958 295 L750 262 L598 350 L390 400 L284 380 L240 402 Z"/>
                            <path fill="#a84d44" d="M428 400 L468 390 L470 512 L430 522 Z M428 563 L470 552 V634 L428 645 Z M608 358 L622 350 V448 L704 462 Q704 480 660 484 L608 470 Z M595 508 L612 494 V594 L674 600 L630 630 L595 625 Z M744 270 L760 273 L758 398 L744 394 Z M782 276 L799 279 L797 406 L782 402 Z M820 281 L838 284 L836 412 L820 409 Z M858 287 L876 290 L874 420 L858 416 Z M897 292 L915 295 V425 L897 421 Z M922 440 L938 443 L934 570 L920 566 Z M1065 350 L1123 362 V462 L1145 497 L975 470 L1020 452 L1060 455 Z"/>
                            <path d="M66 372 L240 408 L284 387 L390 405 L600 355 M68 425 L240 458 L300 432 L390 448 L428 438 M70 472 L240 506 L300 477 L390 493 L428 482 M70 520 L240 552 L300 520 L390 535 L600 480 M70 526 L240 559 L300 527 L390 542 L600 486 M76 662 L246 700 L304 663 L393 683 L588 630 M78 697 L246 735 L304 692 L393 714 L588 662 M66 372 L78 697 M240 402 L246 735 M300 385 L304 692 M390 400 L393 714 M574 358 V664 M588 490 L585 655 M470 390 V512 L428 522 V400 M478 390 V650 M480 425 L605 395 M480 467 L605 435 M428 563 L475 550 V634 L428 645 Z M393 655 L470 636"/>
                            <path d="M608 358 V468 M630 345 V448 L608 468 Q650 490 700 478 M612 494 V594 M624 492 V594 M624 450 L720 400 L968 440 M630 405 L725 348 M630 365 L750 270 M724 280 L718 562 L674 600 M718 532 L968 582 M718 560 L968 608 M720 400 L968 434 M742 270 V394 M762 273 V400 M780 276 V402 M802 280 V408 M818 282 V410 M840 284 V413 M856 288 V417 M878 290 V420 M895 293 V422 M917 296 V430 M725 300 L742 304 M725 350 L742 353 M762 318 L780 322 M762 360 L780 364 M802 325 L818 328 M802 368 L818 371 M840 328 L856 331 M840 372 L856 375 M878 333 L895 336 M878 378 L895 381 M917 340 L968 348 M917 387 L968 394 M915 437 V567 M938 442 L934 572 M960 445 L958 576"/>
                            <path d="M930 320 L1214 372 L1370 247 M968 330 V642 L1060 565 L1130 578 M975 330 V636 M1010 340 V452 M1010 355 L1060 362 M1010 405 L1060 410 M1060 350 V455 L1020 448 M1123 362 V465 M1125 375 L1145 378 M1125 420 L1145 423 M1150 362 L1140 678 M1128 504 V676 L1140 678 L1300 536 L1312 295 M975 470 L1150 500 L1306 374 M968 474 L1145 505 L1306 380 M1073 495 V565 M1073 530 L1130 540 M975 606 L1072 530 M1150 410 L1310 325 M1150 455 L1230 405 M1142 645 L1302 506 M630 632 V663 M602 172 V228 M1172 150 V208"/>
                        </svg>

                        <!-- Green front elevation -->
                        <svg class="wire green" x="330" y="560" width="420" height="280" viewBox="0 0 1260 840">
                            <path d="M95 106 L288 150 M95 106 L100 150 L290 198 M518 258 L772 320 M100 150 L130 478 M172 122 L277 48 M180 122 L280 55 M205 132 L262 95 L266 148 M277 48 L290 198 L303 340 L317 530 M285 65 L288 150"/>
                            <path class="thick" d="M277 50 L518 252 L290 196 M288 66 L408 220"/>
                            <path d="M295 68 L400 222 M290 70 L385 215 M404 145 L566 62 L748 235 M410 152 L566 72 L740 232 M425 145 L420 172 M495 138 L568 100 L650 175 Z M425 145 L730 218 V262 M455 195 L772 272 M515 168 L520 255 M394 225 L403 368 M490 250 L500 392"/>
                            <path d="M768 163 L1132 410 L775 320 Z M780 180 L1105 400 L785 318 Z M775 320 L1090 393 M843 340 L1060 395"/>
                            <path d="M415 270 L443 277 L446 345 L418 338 Z M427 274 L432 342 M508 295 L540 302 L545 398 L514 393 Z M520 298 L527 395 M555 307 L587 314 L592 412 L562 405 Z M602 319 L635 326 L640 425 L608 417 Z M615 322 L622 420 M649 331 L682 338 L685 437 L655 430 Z M697 343 L732 352 V450 L704 444 Z M790 367 L820 373 V403 L796 400 Z M908 397 L960 411 L962 482 L908 470 Z M960 411 L990 418 L995 530 M908 470 L911 510 M745 530 L773 538 V566 L748 560 Z M800 544 L826 552 V580 L800 574 Z M803 552 L824 556"/>
                            <path class="thick" d="M303 340 L500 392 L565 438"/>
                            <path d="M303 340 L440 400 M306 345 L360 382 M303 362 L560 432 M305 370 L530 430 M403 368 L437 402 M115 320 L303 368 M500 415 L595 425 V450 L560 440 M565 440 L848 517 L1062 577 M110 352 L118 355 V368 L112 366 V382 L122 385 V398 M116 408 L124 411 V424 L117 422 Z"/>
                            <path d="M308 410 L410 436 M310 430 L411 456 M311 450 L412 478 M312 470 L413 497 M314 490 L414 518 M315 512 L415 540 M406 398 L417 562 M428 443 L435 545 M433 445 L440 548 M441 447 L449 550 M428 443 L503 462 M455 468 L505 480 M465 490 L507 500 M458 512 L508 522 M458 530 L510 542 M435 545 L510 565 M463 450 V470 H455 L460 490 M503 425 L507 510 L512 590 M565 438 L567 528"/>
                            <path d="M503 430 L560 438 M503 438 L562 447 M503 446 L563 456 M504 454 L564 465 M504 463 L564 474 M505 471 L565 483 M505 480 L565 492 M506 488 L566 501 M506 497 L566 510 M507 507 L567 520 M567 528 L710 648 M567 522 L585 530 V540 L600 545 V555 L615 558 V568 L632 572 V582 L647 586 V595 L662 598 V608 L680 612 V622 L695 626 V634 L712 638 V646 L728 652"/>
                            <path d="M838 338 L850 690 M845 340 L857 690 M850 495 L1055 548 M1053 393 L1055 548 M1060 395 L1068 805 M1048 575 L1052 748 M62 460 L1068 752 M62 460 L65 508 L1068 805 M67 500 L1068 797 M595 668 L610 672 V680 L596 676"/>
                        </svg>

                        <!-- Pink side elevation -->
                        <svg class="wire pink" x="870" y="280" width="340" height="440" viewBox="0 0 1020 1320">
                            <path d="M718 510 L915 335 L908 430 L830 497 M718 510 L717 555 L832 450 L825 530 M722 514 L912 341 M905 430 L938 425 L933 460 L812 570 M825 530 L938 428 M828 502 L905 438 M697 570 L690 690 L668 905 L660 1030 M820 570 L800 790 L793 880 M878 480 L865 640 L850 780 M898 435 L885 610 M893 435 L890 605"/>
                            <path class="thick" d="M717 555 L583 675 L600 780 L520 860 M600 780 L820 568 M900 610 L890 735 M830 498 L905 435 M832 450 L697 570"/>
                            <path d="M583 675 L530 830 L520 985 M588 680 L522 860 M487 852 L530 812 M487 852 L485 895 L530 852 M485 895 L460 1250 M600 780 L590 940 L578 1085 M810 680 L920 572 V588 L812 700 M475 1025 L633 872 L810 705 M475 1040 L615 895 M475 1052 L600 930 M815 690 L900 612 M865 640 L890 605 L897 610"/>
                            <path class="thick" d="M540 880 L537 935 M635 890 L668 905 M613 950 L608 1045 M527 1040 L523 1125 M510 1020 L503 1160"/>
                            <path d="M540 875 L560 860 L555 920 L537 937 Z M622 797 L640 780 L635 870 L615 885 Z M597 970 L625 935 L615 1040 L592 1060 Z M636 895 L660 900 M640 900 L668 912"/>
                            <path d="M527 1040 L548 1020 L540 1105 L523 1125 M548 1020 L585 975 M547 1035 L583 1000 M546 1048 L583 1013 M545 1060 L582 1026 M544 1072 L582 1038 M543 1084 L580 1050 M542 1096 L580 1062 M541 1108 L579 1075 M505 1160 L570 1095 M500 1205 L502 1165 M525 1190 L527 1140 M545 1160 L546 1120 M567 1138 L568 1100"/>
                            <path d="M430 1250 L952 665 M430 1250 L428 1298 L948 705 M430 1288 L948 697 M500 1200 L560 1130 M580 1125 L620 1085 M900 725 V757"/>
                        </svg>

                        <!-- View cube -->
                        <g transform="rotate(3 1361 236)">
                            <ellipse cx="1361" cy="239" rx="33" ry="14" fill="#252222" stroke="#b5b9c0" stroke-width="5"/>
                            <ellipse cx="1361" cy="238" rx="27" ry="11" fill="none" stroke="#777"/>
                            <path fill="#dedede" d="M1341 210 L1356 203 L1379 206 L1366 216 Z"/>
                            <path fill="#cfd1d4" d="M1341 210 L1366 216 V242 L1342 236 Z"/>
                            <path fill="#b9bcc2" d="M1366 216 L1379 206 L1378 231 L1366 242 Z"/>
                        </g>
                        <text class="cube-text" x="1346" y="229">BACK</text>
                        <text class="cube-text" x="1369" y="227">LE</text>
                        <text class="cube-text white" x="1336" y="255">N</text>
                        <text class="cube-text white" x="1388" y="246">W</text>
                        <path fill="#a3a5ad" d="M1327 175 L1331 171 L1335 175 V181 H1327 Z"/>
                        <circle cx="1406" cy="251" r="2" fill="none" stroke="#aaa"/>

                        <!-- Axis tripod -->
                        <g class="tripod">
                            <path stroke="#1826c8" d="M111 935 V912 M111 904 H116 L111 911 H116"/>
                            <path stroke="#c81414" d="M111 935 L91 931 M90 922 L96 930 M96 922 L90 930"/>
                            <path stroke="#1e961e" d="M100 935 L103 940 M109 934 L102 944 M111 935 L108 934"/>
                        </g>
                    </svg>
                </section>

                <aside class="command">
                    <i class="dots"></i>
                    <div class="panel-tabs">
                        <button class="active" aria-label="Create"><svg viewBox="0 0 24 24"><path d="M12 2 V22 M2 12 H22" stroke="#ddd" stroke-width="3"/></svg></button>
                        <button aria-label="Modify"><svg viewBox="0 0 24 24"><rect x="3" y="3" width="18" height="18" fill="none" stroke="#368b8c" stroke-width="2"/><path d="M1 1 H5 V5 H1 Z M19 1 H23 V5 H19 Z M1 19 H5 V23 H1 Z M19 19 H23 V23 H19 Z" fill="#3a3a3a" stroke="#368b8c"/><path d="M7 18 Q8 9 18 6" fill="none" stroke="#999" stroke-width="2"/></svg></button>
                        <button aria-label="Hierarchy"><svg viewBox="0 0 24 24"><path d="M5 1 H19 V8 H5 Z" fill="#999"/><path d="M12 8 V13 M5 18 V13 H19 V18" fill="none" stroke="#368b8c" stroke-width="2"/><path d="M2 17 H7 V22 H2 Z M17 17 H22 V22 H17 Z" fill="#368b8c"/></svg></button>
                        <button aria-label="Motion"><svg viewBox="0 0 24 24"><circle cx="14" cy="12" r="9" fill="#999"/><path d="M8 4 Q-1 12 8 20 M5 4 Q-4 12 5 20" fill="none" stroke="#368b8c" stroke-width="2"/></svg></button>
                        <button aria-label="Display"><svg viewBox="0 0 24 24"><path d="M2 3 H22 V17 H2 Z M9 18 H15 V20 H18 V22 H6 V20 H9 Z" fill="#999"/></svg></button>
                        <button aria-label="Utilities"><svg viewBox="0 0 24 24"><path d="M9 9 L20 20" stroke="#999" stroke-width="4" stroke-linecap="round"/><path d="M2 6 Q4 11 9 9 Q12 6 9 2" fill="none" stroke="#999" stroke-width="3"/></svg></button>
                    </div>
                    <div class="categories">
                        <button class="on" aria-label="Geometry"><svg viewBox="0 0 20 20"><circle cx="10" cy="10" r="8" fill="#ddd" stroke="#444"/></svg></button>
                        <button aria-label="Shapes"><svg viewBox="0 0 20 20"><circle cx="8" cy="8" r="6" fill="#d2d2d2"/><path d="M6 7 H18 V18 H6 Z" fill="#d2d2d2" stroke="#444"/><path d="M8 9 H14 Q13 14 8 14 Z" fill="#444"/></svg></button>
                        <button aria-label="Lights"><svg viewBox="0 0 20 20"><path d="M10 2 Q17 3 15 9 L12 14 H8 L5 9 Q3 3 10 2 Z M8 15 H12 V18 H8 Z" fill="#d2d2d2"/></svg></button>
                        <button aria-label="Cameras"><svg viewBox="0 0 20 20"><path d="M1 4 H14 V16 H1 Z M15 9 L19 4 V16 L15 11 Z" fill="#d2d2d2"/></svg></button>
                        <button aria-label="Helpers"><svg viewBox="0 0 20 20"><path d="M3 3 L17 18 H3 Z M7 11 V14 H10 Z" fill="#d2d2d2" fill-rule="evenodd"/></svg></button>
                        <button aria-label="Space warps"><svg viewBox="0 0 20 20"><path d="M1 5 Q5 1 10 5 T19 4 M1 11 Q5 7 10 11 T19 10 M1 17 Q5 13 10 17 T19 16" fill="none" stroke="#d2d2d2" stroke-width="2"/></svg></button>
                        <button aria-label="Systems"><svg viewBox="0 0 20 20"><circle cx="5" cy="5" r="3" fill="none" stroke="#d2d2d2" stroke-width="2"/><circle cx="13" cy="13" r="4" fill="none" stroke="#d2d2d2" stroke-width="2"/><circle cx="13" cy="13" r="6" fill="none" stroke="#d2d2d2" stroke-width="2" stroke-dasharray="2 3"/></svg></button>
                    </div>
                    <span class="combo primitives"><select aria-label="Category"><option>Standard Primitives</option></select></span>
                    <div class="rollouts">
                        <div class="rollout-list">
                            <section class="rollout">
                                <h2>Object Type</h2>
                                <label class="autogrid"><input type="checkbox" disabled>AutoGrid</label>
                                <div class="primitives-grid">
                                    <button>Box</button><button>Cone</button>
                                    <button>Sphere</button><button>GeoSphere</button>
                                    <button>Cylinder</button><button>Tube</button>
                                    <button>Torus</button><button>Pyramid</button>
                                    <button>Teapot</button><button>Plane</button>
                                    <button>TextPlus</button>
                                </div>
                            </section>
                            <section class="rollout">
                                <h2>Name and Color</h2>
                                <div class="name-row"><input aria-label="Object name"><button class="swatch" aria-label="Object color"></button></div>
                            </section>
                        </div>
                        <i class="track"></i>
                        <i class="track end"></i>
                    </div>
                </aside>
            </div>
        </div>
    </main>

    <footer class="status">
        <div class="listener">
            <div class="macro"></div>
            <input value="MAXScript Mini Listener" aria-label="MAXScript Mini Listener">
        </div>
        <div class="messages"><p>None Selected</p><p>Rendering Time&nbsp; 0:00:18</p></div>
        <div class="coords">
            <div class="coord-row">
                <svg viewBox="0 0 22 22"><path d="M1 6 V1 H6 M16 1 H21 V6 M21 16 V21 H16 M6 21 H1 V16 M6 6 H16 V16 H6 Z" fill="none" stroke="#222" stroke-width="2"/></svg>
                <svg viewBox="0 0 22 22"><path d="M5 10 H17 V20 H5 Z M7 10 V6 Q7 2 11 2 Q15 2 15 6 V10" fill="none" stroke="#252525" stroke-width="2"/></svg>
                <svg viewBox="0 0 22 22"><path d="M3 2 H19 V20 H3 Z" fill="#d2d2d2"/><circle cx="11" cy="11" r="4" fill="none" stroke="#333" stroke-width="2"/><path d="M11 3 V7 M11 15 V19 M4 11 H7 M15 11 H18" stroke="#333" stroke-width="2"/></svg>
                <label>X:<input value="28.2m" disabled></label>
                <label>Y:<input value="-149.716m" disabled></label>
                <label>Z:<input value="0.0m" disabled></label>
                <span>Grid = 10.0m</span>
            </div>
            <div class="tag-row">
                <button aria-label="Time tag"><svg viewBox="0 0 22 22"><path d="M11 2 L19 6 V15 L11 20 L3 15 V6 Z M11 10 L19 6 M11 10 L3 6 M11 10 V20 M7 4 L15 9 V18 M15 4 L7 9 V18" fill="none" stroke="#ccdcec"/></svg></button>
                <span>Add Time Tag</span>
            </div>
        </div>
        <div class="playback">
            <div class="play-row">
                <button aria-label="Go to start"><svg viewBox="0 0 20 20"><path d="M1 3 H3 V17 H1 Z M11 4 V16 L5 10 Z M19 4 V16 L12 10 Z"/></svg></button>
                <button aria-label="Previous frame"><svg viewBox="0 0 20 20"><path d="M9 3 V17 L1 10 Z M11 3 H14 V17 H11 Z M16 3 H19 V17 H16 Z"/></svg></button>
                <button class="more" aria-label="Play"><svg viewBox="0 0 20 20"><path d="M3 1 L17 10 L3 19 Z"/></svg></button>
                <button aria-label="Next frame"><svg viewBox="0 0 20 20"><path d="M11 3 V17 L19 10 Z M1 3 H4 V17 H1 Z M6 3 H9 V17 H6 Z"/></svg></button>
                <button aria-label="Go to end"><svg viewBox="0 0 20 20"><path d="M17 3 H19 V17 H17 Z M9 4 V16 L15 10 Z M1 4 V16 L8 10 Z"/></svg></button>
            </div>
            <div class="play-row">
                <button aria-label="Key mode"><svg viewBox="0 0 20 20"><path d="M8 5 V15 L2 10 Z M12 5 V15 L18 10 Z"/></svg></button>
                <span class="frame"><input value="0" aria-label="Frame"></span>
                <button aria-label="Time configuration"><svg viewBox="0 0 20 20"><circle cx="8" cy="8" r="7"/><path d="M8 3 V9 H12" fill="none" stroke="#333"/><circle cx="14" cy="14" r="4" fill="none" stroke="#f8a91b" stroke-width="3"/></svg></button>
            </div>
        </div>
        <button class="set-key" aria-label="Set keys"><svg viewBox="0 0 36 42"><path d="M14 3 H20 V17 H32 V23 H20 V34 H14 V23 H2 V17 H14 Z" fill="#d2d2d2"/><circle cx="23" cy="34" r="4" fill="none" stroke="#44bfc0" stroke-width="3"/><path d="M26 31 L35 22 M31 26 L34 29" stroke="#44bfc0" stroke-width="3"/></svg></button>
        <div class="keys">
            <button>Auto</button>
            <span class="combo"><select aria-label="Key set"><option>Selected</option></select></span>
            <button>Set K.</button>
            <div class="filters">
                <svg viewBox="0 0 22 24"><path d="M3 23 Q7 16 6 8 M19 23 Q15 16 16 8" fill="none" stroke="#44bfc0" stroke-width="2"/><path d="M1 5 H21" stroke="#d2d2d2"/><rect x="8" y="2" width="6" height="6" fill="#444" stroke="#ddd" stroke-width="2"/></svg>
                <button>Filters...</button>
            </div>
        </div>
        <div class="nav-tools">
            <button aria-label="Zoom"><svg viewBox="0 0 20 20"><circle cx="12" cy="7" r="5" fill="none" stroke="#d2d2d2" stroke-width="2"/><path d="M9 11 L3 18" stroke="#d2d2d2" stroke-width="3"/></svg></button>
            <button aria-label="Zoom all"><svg viewBox="0 0 20 20"><path d="M8 1 H18 V11 H8 Z" fill="#44bfc0"/><path d="M13 1 V11 M8 6 H18" stroke="#333"/><circle cx="9" cy="10" r="3" fill="#444" stroke="#d2d2d2" stroke-width="2"/><path d="M7 13 L2 19" stroke="#d2d2d2" stroke-width="2"/></svg></button>
            <button class="more" aria-label="Zoom extents"><svg viewBox="0 0 20 20"><path d="M1 5 V1 H5 M15 1 H19 V5 M1 15 V19 H5" fill="none" stroke="#d2d2d2"/><path d="M10 2 L17 6 V14 L10 18 L3 14 V6 Z" fill="#44bfc0"/><path d="M3 6 L10 10 L17 6 M10 10 V18" fill="none" stroke="#246d70"/></svg></button>
            <button class="more" aria-label="Zoom extents all"><svg viewBox="0 0 20 20"><path d="M7 9 L1 13 L7 18 L12 13 Z" fill="#d2d2d2"/><path d="M13 1 L19 4 V11 L14 14 L9 10 V4 Z" fill="#44bfc0"/><path d="M9 4 L14 7 L19 4 M14 7 V14" fill="none" stroke="#246d70"/></svg></button>
            <button class="more" aria-label="Field of view"><svg viewBox="0 0 20 20"><path d="M3 2 L15 10 L3 18 M6 4 Q10 10 6 16" fill="none" stroke="#d2d2d2" stroke-width="2"/></svg></button>
            <button class="more" aria-label="Walk through"><svg viewBox="0 0 20 20"><circle cx="10" cy="3" r="2" fill="#d2d2d2"/><path d="M10 5 V12 L6 19 M10 12 L14 19 M5 11 L10 6 L15 11" fill="none" stroke="#d2d2d2" stroke-width="2"/></svg></button>
            <button class="more" aria-label="Orbit"><svg viewBox="0 0 20 20"><circle cx="9" cy="9" r="6" fill="#d2d2d2"/><path d="M4 4 Q8 1 9 9 H3 Z" fill="#44bfc0"/><path d="M2 18 Q18 13 18 2 M6 18 Q18 15 19 7" fill="none" stroke="#d2d2d2" stroke-width="2"/></svg></button>
            <button aria-label="Maximize viewport"><svg viewBox="0 0 20 20"><rect x="2" y="2" width="16" height="16" fill="#d2d2d2"/><path d="M3 11 H9 V17 H3 Z M9 9 L15 4 M11 4 H16 V9" fill="none" stroke="#333" stroke-width="2"/></svg></button>
        </div>
        <div class="watermark"><span class="wm-arabic" lang="ar">مستقل</span><span class="wm-latin">mostaql.com</span></div>
    </footer>

    <div class="taskbar">
        <button class="start" aria-label="Start"><svg viewBox="0 0 20 20"><path d="M0 3 L9 2 V9 H0 Z M10 2 L20 0 V9 H10 Z M0 10 H9 V18 L0 17 Z M10 10 H20 V20 L10 18 Z" fill="#fff"/></svg></button>
        <label class="search"><svg viewBox="0 0 20 20"><circle cx="12" cy="8" r="6" fill="none" stroke="#222" stroke-width="2"/><path d="M8 12 L1 19" stroke="#222" stroke-width="2"/></svg><input placeholder="Type here to search" aria-label="Search"></label>
        <button aria-label="Task view"><svg viewBox="0 0 28 28"><path d="M4 9 H18 V19 H4 Z M4 3 V6 H18 V3 M4 25 V22 H18 V25 M23 3 V8 M23 14 V25" fill="none" stroke="#fff"/><rect x="22" y="9" width="3" height="3" fill="#fff"/></svg></button>
        <button aria-label="File Explorer"><svg viewBox="0 0 28 28"><path d="M0 3 H10 L12 6 H27 V24 H0 Z" fill="#e9a52b"/><path d="M0 8 H28 V24 H0 Z" fill="#fdd26b"/><path d="M5 14 H23 V26 H18 V20 H10 V26 H5 Z" fill="#3a93e0"/></svg></button>
        <button aria-label="Opera"><svg viewBox="0 0 28 28"><ellipse cx="14" cy="14" rx="11" ry="12" fill="none" stroke="#e81c2e" stroke-width="6"/><path d="M17 3 Q26 6 25 14 Q25 22 17 25" fill="none" stroke="#fa4a50" stroke-width="4"/></svg></button>
        <button class="running" aria-label="Chrome"><svg viewBox="0 0 28 28"><circle cx="14" cy="14" r="14" fill="#f8cf3c"/><path d="M14 14 H27 Q25 0 14 0 Q5 0 1 8 Z" fill="#df4b3e"/><path d="M14 14 L2 7 Q-2 15 3 22 Q8 27 13 28 L19 17 Z" fill="#36a853"/><circle cx="14" cy="14" r="7" fill="#fff"/><circle cx="14" cy="14" r="5" fill="#4a8cf0"/></svg></button>
        <button aria-label="Firefox"><svg viewBox="0 0 28 28"><path d="M16 0 Q25 6 27 15 Q26 27 14 28 Q2 27 1 16 Q1 9 4 4 L9 8 Q14 6 16 0 Z" fill="#ff8a1e"/><path d="M16 1 Q26 9 26 17 Q19 14 16 1 Z" fill="#ffd83a"/><path d="M3 18 Q6 27 14 27 Q22 26 25 20 Q14 26 3 18 Z" fill="#f0324e"/><circle cx="15" cy="15" r="6" fill="#7a4de8"/><path d="M8 10 L17 13 L12 18 Z" fill="#ffac22"/></svg></button>
        <button class="running" aria-label="SketchUp"><svg viewBox="0 0 30 30"><rect width="30" height="30" fill="#eef3f8"/><path d="M14 4 L25 9 V21 L15 27 L10 24 L19 19 V14 L10 19 L5 16 V9 Z" fill="#0d5ca6"/><path d="M7 11 L14 8 L22 12 V20 M5 16 L14 12 L19 14" fill="none" stroke="#eef3f8"/><path d="M5 20 L10 22" stroke="#0d5ca6" stroke-width="3"/></svg></button>
        <button class="running current" aria-label="3ds Max"><svg viewBox="0 0 30 30"><rect width="30" height="30" fill="#e3eeee"/><path d="M9 3 H20 V11 L17 13 L20 15 V23 H9 V19 H15 V15 H11 V11 H15 V7 H9 Z" fill="#198890"/><path d="M16 26 H27" stroke="#27a9aa" stroke-width="3" stroke-dasharray="3 1"/></svg></button>
        <div class="tray">
            <svg viewBox="0 0 20 20"><path d="M2 14 L10 6 L18 14" /></svg>
            <svg viewBox="0 0 20 20"><path d="M6 6 H18 V15 H6 V10 M1 3 H6 V7 H1 Z M3 7 V14"/><path d="M8 8 H11 V13 H8 Z" fill="#fff"/></svg>
            <svg viewBox="0 0 20 20"><path d="M5 3 H19 V13 H3 V8 M1 2 H6 V7 H1 Z M11 13 V17 M7 17 H15"/></svg>
            <svg viewBox="0 0 20 20"><path d="M1 7 H4 L9 3 V17 L4 13 H1 Z M12 7 Q14 10 12 13"/><path d="M14 5 Q18 10 14 15 M16 3 Q22 10 16 17" opacity=".4"/></svg>
            <span class="lang">ENG</span>
            <time>14:35<br>2021-07-21</time>
            <button class="notify" aria-label="Notifications"><svg viewBox="0 0 22 22"><path d="M1 1 H21 V18 H14 L9 22 V18 H1 Z" fill="#fff"/><path d="M5 6 H17 M5 10 H17 M5 14 H12" stroke="#1c2b40" stroke-width="2"/></svg><b>1</b></button>
        </div>
    </div>
</body>
</html>
```
FILE: styles.css
```
* {
    box-sizing: border-box;
}

body {
    margin: 0;
    height: 100vh;
    display: flex;
    flex-direction: column;
    overflow: hidden;
    background: #444;
    color: #e6e6e6;
    font-family: "DejaVu Sans Condensed", "DejaVu Sans", sans-serif;
    font-size: 13px;
}

button, input, select {
    font: inherit;
    color: inherit;
    margin: 0;
}

button {
    border: none;
    padding: 0;
    background: none;
    display: flex;
    align-items: center;
    justify-content: center;
}

.sprite {
    position: absolute;
    width: 0;
    height: 0;
}

/* Title bar */
.titlebar {
    height: 29px;
    display: flex;
    align-items: center;
    background: #fff;
    color: #111;
    padding: 0 3px 0 2px;
}

.app-icon {
    width: 20px;
    height: 20px;
}

.titlebar h1 {
    margin: 0 0 0 5px;
    font: 14px "Open Sans", sans-serif;
}

.window-buttons {
    display: flex;
    margin-left: auto;
}

.window-buttons button {
    width: 58px;
    height: 29px;
}

.window-buttons svg {
    width: 14px;
    height: 14px;
    fill: none;
    stroke: #000;
}

/* Menu */
.menubar {
    height: 27px;
    display: flex;
    align-items: center;
    background: linear-gradient(#585858, #424242);
    border-bottom: 1px solid #111;
    font-family: "Open Sans", sans-serif;
    font-size: 14px;
    padding-left: 1px;
}

.menubar a {
    padding: 0 12px;
    color: #f2f2f2;
    text-decoration: none;
    white-space: nowrap;
}

.push {
    margin-left: auto;
    margin-right: 5px;
    font-size: 12px;
}

/* Drop-downs */
.combo {
    position: relative;
    display: flex;
    height: 24px;
    background: #636363;
    border: 1px solid #3c3c3c;
}

.combo select {
    appearance: none;
    flex: 1;
    min-width: 0;
    border: none;
    background: none;
    padding: 0 16px 0 5px;
}

.combo::after {
    content: "";
    position: absolute;
    right: 8px;
    top: 7px;
    border: 4px solid transparent;
    border-top: 7px solid #eee;
    border-bottom: none;
    pointer-events: none;
}

.combo.workspace {
    width: 172px;
    height: 26px;
    font-size: 12px;
}

.combo.small {
    width: 87px;
}

.combo.set {
    width: 150px;
}

.combo.small, .combo.set {
    flex: none;
    align-self: flex-start;
    margin-top: 3px;
    font-size: 12px;
}

.combo.layer {
    width: 260px;
    height: 28px;
    align-self: flex-start;
    margin-top: 2px;
}

.layer-marks {
    width: 64px;
    height: 24px;
}

.combo.layer select {
    padding-left: 3px;
}

/* Toolbars */
.toolbar {
    display: flex;
    align-items: center;
    height: 40px;
    overflow: hidden;
}

.layer-toolbar {
    height: 39px;
}

.tool {
    flex: none;
    position: relative;
    width: 38px;
    height: 36px;
    margin: 1px;
    border-radius: 4px;
    color: #d2d2d2;
}

.tool svg {
    width: 30px;
    height: 30px;
}

.on {
    background: #5c89c4;
}

.more {
    position: relative;
}

.more::after {
    content: "";
    position: absolute;
    right: 0;
    bottom: 0;
    border-left: 5px solid transparent;
    border-bottom: 5px solid #fff;
}

.grip {
    flex: none;
    width: 3px;
    height: 33px;
    margin: 0 4px;
    background: repeating-linear-gradient(#888 0 1px, #444 1px 3px);
}

.sep {
    flex: none;
    width: 1px;
    height: 24px;
    margin: 0 3px;
    background: #111;
}

.layer-field {
    flex: 1;
    min-width: 0;
    height: 28px;
    background: #606060;
    border: 1px solid #3c3c3c;
}

/* Main area */
main {
    flex: 1;
    min-height: 0;
    display: flex;
}

.side {
    flex: none;
    width: 84px;
    display: flex;
    gap: 2px;
    padding-left: 1px;
    overflow: hidden;
}

.side-col {
    width: 40px;
}

.side .tool {
    margin-bottom: 2px;
}

.hgrip {
    display: block;
    height: 3px;
    margin: 4px 3px 6px;
    background: repeating-linear-gradient(90deg, #999 0 1px, #444 1px 3px);
}

.hgrip.tall {
    margin: 12px 3px 6px;
}

.hsep {
    display: block;
    height: 2px;
    margin: 0 2px 8px;
    background: #111;
}

.work {
    flex: 1;
    min-width: 0;
    display: flex;
    flex-direction: column;
}

.ribbon {
    display: flex;
    height: 30px;
}

.ribbon .grip {
    height: 22px;
    margin: 4px 5px 0 2px;
}

.tabs {
    flex: 1;
    height: 26px;
    display: flex;
    align-items: flex-end;
    background: #525252;
    border: 1px solid #6c6c6c;
    border-bottom: none;
    padding-left: 4px;
}

.tabs button {
    height: 23px;
    padding: 0 28px;
    color: #aaa;
    font-family: "Open Sans", sans-serif;
    font-size: 14px;
}

.tabs .active {
    padding: 0 13px 0 25px;
    color: #ddd;
    background: linear-gradient(#707070, #585858);
    border: 1px solid #3a3a3a;
    border-radius: 3px 3px 0 0;
}

.ribbon-toggle {
    width: 32px;
    height: 12px;
    margin-left: 10px;
    align-self: center;
}

.stage {
    flex: 1;
    min-height: 0;
    display: flex;
}

.viewport {
    position: relative;
    flex: 1;
    min-width: 0;
    border: 2px solid #7c6826;
    background: #353535;
}

.scene {
    display: block;
    width: 100%;
    height: 100%;
}

.vp-label {
    position: absolute;
    left: 4px;
    top: 5px;
    color: #ccc;
    font-family: "Open Sans", sans-serif;
    font-size: 13px;
}

.scene path {
    vector-effect: non-scaling-stroke;
}

.grid, .axis {
    fill: none;
    stroke: #4b4b4b;
}

.axis {
    stroke: #080808;
}

.wire {
    fill: none;
    overflow: visible;
    shape-rendering: crispEdges;
}

.wire .thick {
    stroke-width: 2;
}

.blue {
    stroke: #5690e0;
}

.yellow {
    stroke: #ff0;
}

.green {
    stroke: #58e458;
}

.pink {
    stroke: #ff0a80;
}

.clay {
    stroke: #3a0b08;
    fill: none;
    overflow: visible;
}

.cube-text {
    font: bold 7px "Liberation Sans", sans-serif;
    fill: #444;
}

.cube-text.white {
    fill: #eee;
}

.tripod {
    fill: none;
}

/* Command panel */
.command {
    flex: none;
    width: 503px;
    padding: 1px 0 0 4px;
    display: flex;
    flex-direction: column;
}

.dots {
    height: 3px;
    margin-left: 2px;
    background: repeating-linear-gradient(90deg, #aaa 0 1px, #444 1px 2px);
    border-bottom: 1px solid #777;
}

.panel-tabs {
    display: flex;
    margin-top: 7px;
    background: #3a3a3a;
}

.panel-tabs button {
    width: 40px;
    height: 35px;
    border-right: 1px solid #303030;
}

.panel-tabs svg {
    width: 22px;
    height: 22px;
}

.panel-tabs .active {
    background: #444;
}

.categories {
    display: flex;
    gap: 2px;
    padding: 4px 4px 7px;
}

.categories button {
    width: 26px;
    height: 26px;
    border-radius: 3px;
}

.categories svg {
    width: 20px;
    height: 20px;
}

.combo.primitives {
    width: 247px;
    height: 26px;
    margin-left: 2px;
}

.rollouts {
    flex: 1;
    min-height: 0;
    display: flex;
    gap: 4px;
    padding: 5px 0 2px 3px;
}

.rollout-list {
    width: 235px;
}

.rollout {
    background: #505050;
    border: 1px solid #3e3e3e;
    border-radius: 4px;
    margin-bottom: 4px;
    padding-bottom: 6px;
}

.rollout h2 {
    display: flex;
    align-items: center;
    height: 22px;
    margin: 0;
    padding: 0 8px;
    font-size: 13px;
}

.rollout h2::before {
    content: "";
    border: 4px solid transparent;
    border-top: 6px solid #bbb;
    border-bottom: none;
    margin-right: 7px;
}

.rollout h2::after {
    content: "";
    width: 8px;
    height: 7px;
    margin-left: auto;
    background: repeating-linear-gradient(90deg, transparent 0 1px, #505050 1px 2px), repeating-linear-gradient(#999 0 1px, #505050 1px 2px);
}

.autogrid {
    display: flex;
    align-items: center;
    gap: 4px;
    height: 24px;
    margin-left: 53px;
    color: #8c8c8c;
}

.autogrid input {
    appearance: none;
    width: 14px;
    height: 14px;
    background: #555;
    border: 1px solid #444;
}

.primitives-grid {
    display: grid;
    grid-template-columns: 92px 92px;
    gap: 4px 12px;
    padding: 1px 0 0 19px;
}

.primitives-grid button, .keys button {
    height: 22px;
    background: #646464;
    border: 1px solid #444;
    border-radius: 4px;
}

.name-row {
    display: flex;
    gap: 4px;
    padding: 9px 14px 5px 17px;
}

.name-row input {
    flex: 1;
    min-width: 0;
    height: 24px;
    background: #595959;
    border: 1px solid #484848;
}

.swatch {
    width: 22px;
    height: 24px;
    background: #99f099;
    border: 1px solid #111;
}

.track {
    width: 8px;
    background: #3d3d3d;
    border-radius: 4px;
}

.track.end {
    width: 5px;
    margin-left: auto;
}

/* Status bar */
.status {
    position: relative;
    height: 68px;
    display: flex;
    padding: 5px 13px 0 4px;
}

.listener {
    width: 213px;
    height: 58px;
    display: flex;
    flex-direction: column;
    gap: 1px;
}

.macro, .listener input {
    height: 29px;
    border: 2px inset #ddd;
    background: #dcc3c3;
}

.listener input {
    width: 213px;
    background: #fff;
    color: #7c857c;
    font: 16px "Liberation Mono", monospace;
    padding: 0 2px 8px;
}

.messages {
    flex: 1;
    border-left: 2px solid #222;
    margin-left: 4px;
    padding-left: 4px;
}

.messages p {
    margin: 0;
    line-height: 31px;
}

.coords {
    width: 544px;
}

.coord-row {
    display: flex;
    align-items: center;
    gap: 13px;
    height: 31px;
    white-space: nowrap;
}

.coord-row > svg {
    width: 20px;
    height: 20px;
}

.coord-row label {
    display: flex;
    align-items: center;
    gap: 3px;
}

.coord-row input {
    width: 73px;
    height: 21px;
    background: #595959;
    border: 1px solid #484848;
    color: #919191;
    padding: 0 2px;
}

.tag-row {
    display: flex;
    align-items: center;
    gap: 6px;
    height: 31px;
    padding-left: 378px;
}

.tag-row button {
    width: 26px;
    height: 26px;
    background: #5c89c4;
    border-radius: 3px;
}

.tag-row svg {
    width: 22px;
    height: 22px;
}

.playback {
    width: 153px;
}

.play-row {
    display: flex;
    align-items: center;
    justify-content: space-between;
    height: 29px;
    padding-right: 13px;
}

.play-row button {
    width: 22px;
    height: 22px;
}

.play-row svg {
    width: 20px;
    height: 20px;
    fill: #d2d2d2;
}

.frame {
    position: relative;
    width: 88px;
}

.frame input {
    width: 88px;
    height: 22px;
    background: #636363;
    border: 1px solid #333;
    padding: 0 4px;
}

.frame::after {
    content: "▲\A▼";
    white-space: pre;
    position: absolute;
    right: 4px;
    top: 2px;
    font-size: 8px;
    line-height: 9px;
}

.set-key {
    width: 54px;
    height: 55px;
    margin: 2px 4px 0 6px;
    background: #646464;
    border-radius: 4px;
}

.set-key svg {
    width: 38px;
    height: 44px;
}

.keys {
    display: grid;
    grid-template-columns: 60px 145px;
    grid-template-rows: 26px 26px;
    gap: 2px 4px;
    padding-top: 2px;
}

.keys button {
    width: 100%;
    height: 26px;
}

.filters {
    display: flex;
    gap: 8px;
}

.filters svg {
    flex: none;
    width: 24px;
    height: 24px;
}

.nav-tools {
    display: grid;
    grid-template-columns: repeat(4, 28px);
    grid-template-rows: 27px 27px;
    margin-left: 10px;
    padding-top: 1px;
}

.nav-tools button {
    width: 26px;
}

.nav-tools svg {
    width: 20px;
    height: 20px;
}

.watermark {
    position: absolute;
    left: 44%;
    top: -22px;
    z-index: 2;
    display: flex;
    flex-direction: column;
    align-items: center;
    width: 230px;
    color: #c8c8c8;
    opacity: .5;
    pointer-events: none;
}

.wm-arabic {
    font: bold 66px "DejaVu Sans", sans-serif;
    line-height: 80px;
}

.wm-latin {
    font: bold 39px Roboto, sans-serif;
    line-height: 38px;
}

/* Taskbar */
.taskbar {
    height: 50px;
    display: flex;
    background: linear-gradient(90deg, #20363f 30%, #20343f 60%, #1b2743 90%);
    color: #fff;
    font-family: "Open Sans", sans-serif;
}

.taskbar > button {
    width: 62px;
    border-bottom: 3px solid transparent;
    border-top: 3px solid transparent;
}

.taskbar > button svg {
    width: 28px;
    height: 28px;
}

.taskbar > .start {
    width: 60px;
}

.start svg {
    padding: 4px;
}

.running {
    background: linear-gradient(#76b4ee, #76b4ee) center bottom / 51px 3px no-repeat border-box;
}

.running.current {
    background: linear-gradient(#76b4ee, #76b4ee) center bottom / 62px 3px no-repeat border-box, #4a5c65 border-box;
}

.search {
    width: 430px;
    display: flex;
    align-items: center;
    gap: 12px;
    padding-left: 15px;
    background: #f2f2f2;
    border: 1px solid #bbb;
}

.search svg {
    width: 20px;
    height: 20px;
}

.search input {
    flex: 1;
    border: none;
    background: none;
    font-size: 18px;
}

.search input::placeholder {
    color: #333;
}

.tray {
    margin-left: auto;
    display: flex;
    align-items: center;
    gap: 11px;
}

.tray svg {
    width: 20px;
    height: 20px;
    fill: none;
    stroke: #fff;
}

.lang {
    margin-left: 2px;
    font-size: 14px;
}

.tray time {
    margin-left: 4px;
    font-size: 14px;
    line-height: 23px;
    text-align: center;
}

.notify {
    position: relative;
    width: 56px;
    height: 50px;
    padding-right: 16px;
    border-right: 1px solid #667;
    margin-right: 5px;
}

.notify b {
    position: absolute;
    right: 16px;
    bottom: 3px;
    width: 20px;
    height: 20px;
    border-radius: 50%;
    border: 1px solid #aaa;
    background: #333b44;
    font-weight: normal;
    font-size: 14px;
    line-height: 18px;
}
```
